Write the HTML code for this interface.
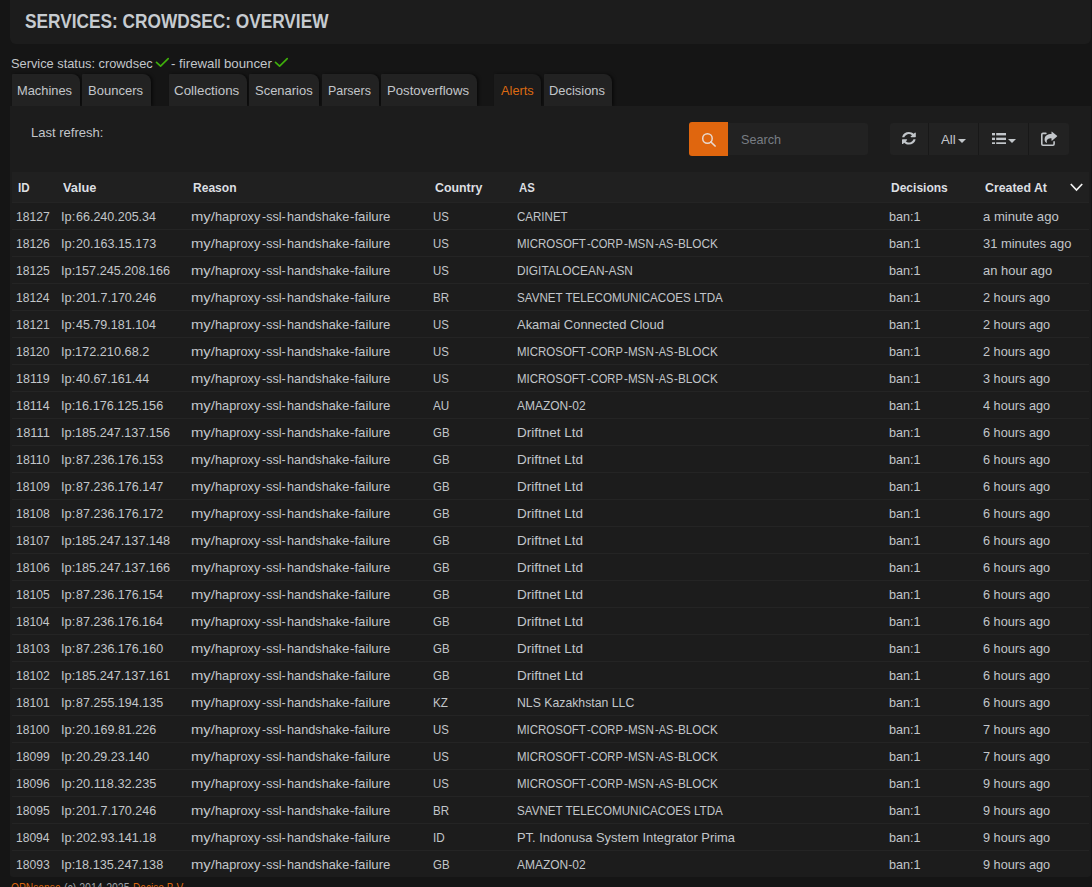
<!DOCTYPE html>
<html><head><meta charset="utf-8"><title>Services: CrowdSec: Overview</title>
<style>
html,body{margin:0;padding:0}
body{width:1092px;height:887px;overflow:hidden;background:#151515;position:relative;font-family:"Liberation Sans",sans-serif}
.t{position:absolute;white-space:pre;line-height:1;transform-origin:0 0;display:block}
.b{position:absolute;display:block}
</style></head><body>
<div class="b" style="left:10px;top:0px;width:1081px;height:44px;background:#1c1c1c;border-radius:0 0 6px 6px"></div>
<span class="t" style="left:25.00px;top:11.17px;font-size:20px;font-weight:700;color:#c6cbd0;transform:scaleX(0.8633);">SERVICES: CROWDSEC: OVERVIEW</span>
<span class="t" style="left:11.00px;top:56.90px;font-size:13px;font-weight:400;color:#c2c6ca;transform:scaleX(0.9853);">Service status: crowdsec</span>
<span class="t" style="left:171.00px;top:56.90px;font-size:13px;font-weight:400;color:#c2c6ca;transform:scaleX(1.0192);">- firewall bouncer</span>
<svg class="b" style="left:155.6px;top:58.2px" width="13" height="10" viewBox="0 0 13 10" overflow="visible"><path d="M0.5 4.4 L4.6 8.1 L12.2 0.7" fill="none" stroke="#3fae0b" stroke-width="1.7" stroke-linecap="round" stroke-linejoin="round"/></svg>
<svg class="b" style="left:275.4px;top:58.2px" width="13" height="10" viewBox="0 0 13 10" overflow="visible"><path d="M0.5 4.4 L4.6 8.1 L12.2 0.7" fill="none" stroke="#3fae0b" stroke-width="1.7" stroke-linecap="round" stroke-linejoin="round"/></svg>
<div class="b" style="left:11.6px;top:73.6px;width:68.30000000000001px;height:32.0px;background:#222222;border-radius:1px 8px 0 0;box-shadow:2px 0 3px rgba(0,0,0,.5)"></div>
<div class="b" style="left:82.0px;top:73.6px;width:68.5px;height:32.0px;background:#222222;border-radius:1px 8px 0 0;box-shadow:2px 0 3px rgba(0,0,0,.5)"></div>
<div class="b" style="left:168.5px;top:73.6px;width:78.39999999999998px;height:32.0px;background:#222222;border-radius:1px 8px 0 0;box-shadow:2px 0 3px rgba(0,0,0,.5)"></div>
<div class="b" style="left:248.6px;top:73.6px;width:70.70000000000002px;height:32.0px;background:#222222;border-radius:1px 8px 0 0;box-shadow:2px 0 3px rgba(0,0,0,.5)"></div>
<div class="b" style="left:322.0px;top:73.6px;width:56.599999999999966px;height:32.0px;background:#222222;border-radius:1px 8px 0 0;box-shadow:2px 0 3px rgba(0,0,0,.5)"></div>
<div class="b" style="left:381.3px;top:73.6px;width:95.79999999999995px;height:32.0px;background:#222222;border-radius:1px 8px 0 0;box-shadow:2px 0 3px rgba(0,0,0,.5)"></div>
<div class="b" style="left:494.20000000000005px;top:73.6px;width:46.5px;height:32.0px;background:#1c1c1c;border-radius:1px 8px 0 0;box-shadow:2px 0 3px rgba(0,0,0,.5)"></div>
<div class="b" style="left:543.5px;top:73.6px;width:68.60000000000002px;height:32.0px;background:#222222;border-radius:1px 8px 0 0;box-shadow:2px 0 3px rgba(0,0,0,.5)"></div>
<div class="b" style="left:10.2px;top:106.3px;width:1080.8px;height:770.7px;background:#1c1c1c;border-radius:0 0 3px 3px"></div>
<span class="t" style="left:17.00px;top:83.90px;font-size:13px;font-weight:400;color:#c2c6ca;transform:scaleX(0.9891);">Machines</span>
<span class="t" style="left:88.00px;top:83.90px;font-size:13px;font-weight:400;color:#c2c6ca;transform:scaleX(1.0009);">Bouncers</span>
<span class="t" style="left:174.00px;top:83.90px;font-size:13px;font-weight:400;color:#c2c6ca;transform:scaleX(1.0262);">Collections</span>
<span class="t" style="left:255.00px;top:83.90px;font-size:13px;font-weight:400;color:#c2c6ca;transform:scaleX(0.9983);">Scenarios</span>
<span class="t" style="left:328.00px;top:83.90px;font-size:13px;font-weight:400;color:#c2c6ca;transform:scaleX(0.9571);">Parsers</span>
<span class="t" style="left:387.00px;top:83.90px;font-size:13px;font-weight:400;color:#c2c6ca;transform:scaleX(1.0130);">Postoverflows</span>
<span class="t" style="left:501.00px;top:83.90px;font-size:13px;font-weight:400;color:#dd6a12;transform:scaleX(0.9847);">Alerts</span>
<span class="t" style="left:549.00px;top:83.90px;font-size:13px;font-weight:400;color:#c2c6ca;transform:scaleX(0.9937);">Decisions</span>
<span class="t" style="left:31.00px;top:125.60px;font-size:13px;font-weight:400;color:#c2c6ca;transform:scaleX(1.0021);">Last refresh:</span>
<div class="b" style="left:689.2px;top:121.8px;width:39.0px;height:34.000000000000014px;background:#e0660e;border-radius:3px 0 0 3px"></div>
<svg class="b" style="left:701px;top:132px" width="16" height="16" viewBox="0 0 16 16"><circle cx="6.45" cy="6.5" r="4.75" fill="none" stroke="#e8d9d0" stroke-width="1.5"/><path d="M9.9 10 L14.1 14" stroke="#e8d9d0" stroke-width="1.7" stroke-linecap="round"/></svg>
<div class="b" style="left:728.2px;top:123.2px;width:139.79999999999995px;height:31.700000000000003px;background:#222222;border-radius:0 3px 3px 0"></div>
<span class="t" style="left:741.00px;top:133.10px;font-size:13px;font-weight:400;color:#787d83;transform:scaleX(0.9702);">Search</span>
<div class="b" style="left:890.2px;top:123.2px;width:178.39999999999986px;height:31.700000000000003px;background:#222222;border-radius:3px"></div>
<div class="b" style="left:927.7px;top:123.2px;width:1.0px;height:31.700000000000003px;background:#181818;"></div>
<div class="b" style="left:977.9px;top:123.2px;width:1.0px;height:31.700000000000003px;background:#181818;"></div>
<div class="b" style="left:1027.9px;top:123.2px;width:1.0px;height:31.700000000000003px;background:#181818;"></div>
<span class="t" style="left:941.00px;top:133.10px;font-size:13px;font-weight:400;color:#c2c6ca;transform:scaleX(1.0185);">All</span>
<svg class="b" style="left:958.1px;top:138.9px" width="8" height="4" viewBox="0 0 8 4"><path d="M0 0H8L4 4Z" fill="#c2c6ca"/></svg>
<svg class="b" style="left:1008.3px;top:138.9px" width="8" height="4" viewBox="0 0 8 4"><path d="M0 0H8L4 4Z" fill="#c2c6ca"/></svg>
<svg class="b" style="left:902.3px;top:132.4px" width="13.8" height="12.6" viewBox="128 128 1536 1536" preserveAspectRatio="none"><path fill="#c2c6ca" d="M1639 1056q0 5-1 7-64 268-268 434.500t-478 166.500q-146 0-282.500-55t-243.500-157l-129 129q-19 19-45 19t-45-19-19-45v-448q0-26 19-45t45-19h448q26 0 45 19t19 45-19 45l-137 137q71 66 161 102t187 36q134 0 250-65t186-179q11-17 53-117 8-23 30-23h192q13 0 22.500 9.500t9.500 22.500zm25-800v448q0 26-19 45t-45 19h-448q-26 0-45-19t-19-45 19-45l138-138q-148-137-349-137-134 0-250 65t-186 179q-11 17-53 117-8 23-30 23h-199q-13 0-22.500-9.500t-9.500-22.500v-7q65-268 270-434.500t480-166.500q146 0 284 55.500t245 156.500l130-129q19-19 45-19t45 19 19 45z"/></svg>
<svg class="b" style="left:991.6px;top:132.8px" width="14.4" height="11.7" viewBox="0 0 14.4 11.7" fill="#c2c6ca"><rect x="0" y="0" width="3" height="2.4"/><rect x="4.2" y="0" width="10.2" height="2.4"/><rect x="0" y="4.65" width="3" height="2.4"/><rect x="4.2" y="4.65" width="10.2" height="2.4"/><rect x="0" y="9.3" width="3" height="2.4"/><rect x="4.2" y="9.3" width="10.2" height="2.4"/></svg>
<svg class="b" style="left:1040px;top:131px" width="18" height="16" viewBox="0 0 18 16"><path d="M5.9 2.4H3.0Q1.8 2.4 1.8 3.6V13.0Q1.8 14.2 3.0 14.2H12.9Q14.1 14.2 14.1 13.0V10.9" fill="none" stroke="#c2c6ca" stroke-width="1.6" stroke-linecap="round"/><path fill="#c2c6ca" d="M11.5 0.9Q11.5 0.3 12.0 0.7L17.0 4.8Q17.4 5.2 17.0 5.6L12.0 9.7Q11.5 10.1 11.5 9.5V7.3C8.2 7.3 6.3 8.3 6.9 11.3C7.0 11.9 6.4 12.1 6.0 11.6C5.2 10.7 4.6 9.6 4.6 8.4C4.6 4.6 7.8 3.1 11.5 3.1Z"/></svg>
<div class="b" style="left:12px;top:172px;width:1076.5px;height:30px;background:#202020;"></div>
<span class="t" style="left:18.00px;top:181.10px;font-size:13px;font-weight:700;color:#dcdfe2;transform:scaleX(0.8920);">ID</span>
<span class="t" style="left:63.00px;top:181.10px;font-size:13px;font-weight:700;color:#dcdfe2;transform:scaleX(0.9836);">Value</span>
<span class="t" style="left:193.00px;top:181.10px;font-size:13px;font-weight:700;color:#dcdfe2;transform:scaleX(0.9265);">Reason</span>
<span class="t" style="left:435.00px;top:181.10px;font-size:13px;font-weight:700;color:#dcdfe2;transform:scaleX(0.9518);">Country</span>
<span class="t" style="left:519.00px;top:181.10px;font-size:13px;font-weight:700;color:#dcdfe2;transform:scaleX(0.8771);">AS</span>
<span class="t" style="left:891.00px;top:181.10px;font-size:13px;font-weight:700;color:#dcdfe2;transform:scaleX(0.9243);">Decisions</span>
<span class="t" style="left:985.00px;top:181.10px;font-size:13px;font-weight:700;color:#dcdfe2;transform:scaleX(0.9485);">Created At</span>
<svg class="b" style="left:1070.4px;top:183.2px" width="13" height="9" viewBox="0 0 13 9"><path d="M0.8 1 L6.5 7 L12.2 1" fill="none" stroke="#f2f2f2" stroke-width="1.7"/></svg>
<div class="b" style="left:12px;top:202px;width:1076.5px;height:1px;background:#242424;"></div>
<span class="t" style="left:16.00px;top:210.10px;font-size:13px;font-weight:400;color:#c2c6ca;transform:scaleX(0.9338);">18127</span>
<span class="t" style="left:61.00px;top:210.10px;font-size:13px;font-weight:400;color:#c2c6ca;transform:scaleX(0.9849);">Ip:</span>
<span class="t" style="left:76.00px;top:210.10px;font-size:13px;font-weight:400;color:#c2c6ca;transform:scaleX(0.9625);">66.240.205.34</span>
<span class="t" style="left:191.00px;top:210.10px;font-size:13px;font-weight:400;color:#c2c6ca;transform:scaleX(1.1398);">my/</span>
<span class="t" style="left:215.00px;top:210.10px;font-size:13px;font-weight:400;color:#c2c6ca;transform:scaleX(0.9805);">haproxy</span>
<span class="t" style="left:262.00px;top:210.10px;font-size:13px;font-weight:400;color:#c2c6ca;transform:scaleX(0.9646);">-ssl-</span>
<span class="t" style="left:287.00px;top:210.10px;font-size:13px;font-weight:400;color:#c2c6ca;transform:scaleX(0.9786);">handshake</span>
<span class="t" style="left:350.00px;top:210.10px;font-size:13px;font-weight:400;color:#c2c6ca;transform:scaleX(1.0178);">-failure</span>
<span class="t" style="left:433.00px;top:210.10px;font-size:13px;font-weight:400;color:#c2c6ca;transform:scaleX(0.8771);">US</span>
<span class="t" style="left:517.00px;top:210.10px;font-size:13px;font-weight:400;color:#c2c6ca;transform:scaleX(0.8872);">CARINET</span>
<span class="t" style="left:889.00px;top:210.10px;font-size:13px;font-weight:400;color:#c2c6ca;transform:scaleX(0.9703);">ban:1</span>
<span class="t" style="left:983.00px;top:210.10px;font-size:13px;font-weight:400;color:#c2c6ca;transform:scaleX(1.0074);">a minute ago</span>
<div class="b" style="left:12px;top:229px;width:1076.5px;height:1px;background:#242424;"></div>
<span class="t" style="left:16.00px;top:237.10px;font-size:13px;font-weight:400;color:#c2c6ca;transform:scaleX(0.9338);">18126</span>
<span class="t" style="left:61.00px;top:237.10px;font-size:13px;font-weight:400;color:#c2c6ca;transform:scaleX(0.9849);">Ip:</span>
<span class="t" style="left:76.00px;top:237.10px;font-size:13px;font-weight:400;color:#c2c6ca;transform:scaleX(0.9655);">20.163.15.173</span>
<span class="t" style="left:191.00px;top:237.10px;font-size:13px;font-weight:400;color:#c2c6ca;transform:scaleX(1.1398);">my/</span>
<span class="t" style="left:215.00px;top:237.10px;font-size:13px;font-weight:400;color:#c2c6ca;transform:scaleX(0.9805);">haproxy</span>
<span class="t" style="left:262.00px;top:237.10px;font-size:13px;font-weight:400;color:#c2c6ca;transform:scaleX(0.9646);">-ssl-</span>
<span class="t" style="left:287.00px;top:237.10px;font-size:13px;font-weight:400;color:#c2c6ca;transform:scaleX(0.9786);">handshake</span>
<span class="t" style="left:350.00px;top:237.10px;font-size:13px;font-weight:400;color:#c2c6ca;transform:scaleX(1.0178);">-failure</span>
<span class="t" style="left:433.00px;top:237.10px;font-size:13px;font-weight:400;color:#c2c6ca;transform:scaleX(0.8771);">US</span>
<span class="t" style="left:517.00px;top:237.10px;font-size:13px;font-weight:400;color:#c2c6ca;transform:scaleX(0.8830);">MICROSOFT</span>
<span class="t" style="left:587.00px;top:237.10px;font-size:13px;font-weight:400;color:#c2c6ca;transform:scaleX(0.8545);">-CORP</span>
<span class="t" style="left:624.00px;top:237.10px;font-size:13px;font-weight:400;color:#c2c6ca;transform:scaleX(0.8977);">-MSN</span>
<span class="t" style="left:655.00px;top:237.10px;font-size:13px;font-weight:400;color:#c2c6ca;transform:scaleX(0.8500);">-AS</span>
<span class="t" style="left:674.00px;top:237.10px;font-size:13px;font-weight:400;color:#c2c6ca;transform:scaleX(0.9067);">-BLOCK</span>
<span class="t" style="left:889.00px;top:237.10px;font-size:13px;font-weight:400;color:#c2c6ca;transform:scaleX(0.9703);">ban:1</span>
<span class="t" style="left:983.00px;top:237.10px;font-size:13px;font-weight:400;color:#c2c6ca;transform:scaleX(0.9943);">31 minutes ago</span>
<div class="b" style="left:12px;top:256px;width:1076.5px;height:1px;background:#242424;"></div>
<span class="t" style="left:16.00px;top:264.10px;font-size:13px;font-weight:400;color:#c2c6ca;transform:scaleX(0.9338);">18125</span>
<span class="t" style="left:61.00px;top:264.10px;font-size:13px;font-weight:400;color:#c2c6ca;transform:scaleX(0.9849);">Ip:</span>
<span class="t" style="left:75.00px;top:264.10px;font-size:13px;font-weight:400;color:#c2c6ca;transform:scaleX(0.9747);">157.245.208.166</span>
<span class="t" style="left:191.00px;top:264.10px;font-size:13px;font-weight:400;color:#c2c6ca;transform:scaleX(1.1398);">my/</span>
<span class="t" style="left:215.00px;top:264.10px;font-size:13px;font-weight:400;color:#c2c6ca;transform:scaleX(0.9805);">haproxy</span>
<span class="t" style="left:262.00px;top:264.10px;font-size:13px;font-weight:400;color:#c2c6ca;transform:scaleX(0.9646);">-ssl-</span>
<span class="t" style="left:287.00px;top:264.10px;font-size:13px;font-weight:400;color:#c2c6ca;transform:scaleX(0.9786);">handshake</span>
<span class="t" style="left:350.00px;top:264.10px;font-size:13px;font-weight:400;color:#c2c6ca;transform:scaleX(1.0178);">-failure</span>
<span class="t" style="left:433.00px;top:264.10px;font-size:13px;font-weight:400;color:#c2c6ca;transform:scaleX(0.8771);">US</span>
<span class="t" style="left:517.00px;top:264.10px;font-size:13px;font-weight:400;color:#c2c6ca;transform:scaleX(0.9133);">DIGITALOCEAN-ASN</span>
<span class="t" style="left:889.00px;top:264.10px;font-size:13px;font-weight:400;color:#c2c6ca;transform:scaleX(0.9703);">ban:1</span>
<span class="t" style="left:983.00px;top:264.10px;font-size:13px;font-weight:400;color:#c2c6ca;transform:scaleX(0.9971);">an hour ago</span>
<div class="b" style="left:12px;top:283px;width:1076.5px;height:1px;background:#242424;"></div>
<span class="t" style="left:16.00px;top:291.10px;font-size:13px;font-weight:400;color:#c2c6ca;transform:scaleX(0.9273);">18124</span>
<span class="t" style="left:61.00px;top:291.10px;font-size:13px;font-weight:400;color:#c2c6ca;transform:scaleX(0.9849);">Ip:</span>
<span class="t" style="left:76.00px;top:291.10px;font-size:13px;font-weight:400;color:#c2c6ca;transform:scaleX(0.9655);">201.7.170.246</span>
<span class="t" style="left:191.00px;top:291.10px;font-size:13px;font-weight:400;color:#c2c6ca;transform:scaleX(1.1398);">my/</span>
<span class="t" style="left:215.00px;top:291.10px;font-size:13px;font-weight:400;color:#c2c6ca;transform:scaleX(0.9805);">haproxy</span>
<span class="t" style="left:262.00px;top:291.10px;font-size:13px;font-weight:400;color:#c2c6ca;transform:scaleX(0.9646);">-ssl-</span>
<span class="t" style="left:287.00px;top:291.10px;font-size:13px;font-weight:400;color:#c2c6ca;transform:scaleX(0.9786);">handshake</span>
<span class="t" style="left:350.00px;top:291.10px;font-size:13px;font-weight:400;color:#c2c6ca;transform:scaleX(1.0178);">-failure</span>
<span class="t" style="left:433.00px;top:291.10px;font-size:13px;font-weight:400;color:#c2c6ca;transform:scaleX(0.8886);">BR</span>
<span class="t" style="left:517.00px;top:291.10px;font-size:13px;font-weight:400;color:#c2c6ca;transform:scaleX(0.8941);">SAVNET TELECOMUNICACOES LTDA</span>
<span class="t" style="left:889.00px;top:291.10px;font-size:13px;font-weight:400;color:#c2c6ca;transform:scaleX(0.9703);">ban:1</span>
<span class="t" style="left:983.00px;top:291.10px;font-size:13px;font-weight:400;color:#c2c6ca;transform:scaleX(0.9787);">2 hours ago</span>
<div class="b" style="left:12px;top:310px;width:1076.5px;height:1px;background:#242424;"></div>
<span class="t" style="left:16.00px;top:318.10px;font-size:13px;font-weight:400;color:#c2c6ca;transform:scaleX(0.9338);">18121</span>
<span class="t" style="left:61.00px;top:318.10px;font-size:13px;font-weight:400;color:#c2c6ca;transform:scaleX(0.9849);">Ip:</span>
<span class="t" style="left:76.00px;top:318.10px;font-size:13px;font-weight:400;color:#c2c6ca;transform:scaleX(0.9625);">45.79.181.104</span>
<span class="t" style="left:191.00px;top:318.10px;font-size:13px;font-weight:400;color:#c2c6ca;transform:scaleX(1.1398);">my/</span>
<span class="t" style="left:215.00px;top:318.10px;font-size:13px;font-weight:400;color:#c2c6ca;transform:scaleX(0.9805);">haproxy</span>
<span class="t" style="left:262.00px;top:318.10px;font-size:13px;font-weight:400;color:#c2c6ca;transform:scaleX(0.9646);">-ssl-</span>
<span class="t" style="left:287.00px;top:318.10px;font-size:13px;font-weight:400;color:#c2c6ca;transform:scaleX(0.9786);">handshake</span>
<span class="t" style="left:350.00px;top:318.10px;font-size:13px;font-weight:400;color:#c2c6ca;transform:scaleX(1.0178);">-failure</span>
<span class="t" style="left:433.00px;top:318.10px;font-size:13px;font-weight:400;color:#c2c6ca;transform:scaleX(0.8771);">US</span>
<span class="t" style="left:517.00px;top:318.10px;font-size:13px;font-weight:400;color:#c2c6ca;transform:scaleX(0.9969);">Akamai Connected Cloud</span>
<span class="t" style="left:889.00px;top:318.10px;font-size:13px;font-weight:400;color:#c2c6ca;transform:scaleX(0.9703);">ban:1</span>
<span class="t" style="left:983.00px;top:318.10px;font-size:13px;font-weight:400;color:#c2c6ca;transform:scaleX(0.9787);">2 hours ago</span>
<div class="b" style="left:12px;top:337px;width:1076.5px;height:1px;background:#242424;"></div>
<span class="t" style="left:16.00px;top:345.10px;font-size:13px;font-weight:400;color:#c2c6ca;transform:scaleX(0.9273);">18120</span>
<span class="t" style="left:61.00px;top:345.10px;font-size:13px;font-weight:400;color:#c2c6ca;transform:scaleX(0.9849);">Ip:</span>
<span class="t" style="left:75.00px;top:345.10px;font-size:13px;font-weight:400;color:#c2c6ca;transform:scaleX(0.9794);">172.210.68.2</span>
<span class="t" style="left:191.00px;top:345.10px;font-size:13px;font-weight:400;color:#c2c6ca;transform:scaleX(1.1398);">my/</span>
<span class="t" style="left:215.00px;top:345.10px;font-size:13px;font-weight:400;color:#c2c6ca;transform:scaleX(0.9805);">haproxy</span>
<span class="t" style="left:262.00px;top:345.10px;font-size:13px;font-weight:400;color:#c2c6ca;transform:scaleX(0.9646);">-ssl-</span>
<span class="t" style="left:287.00px;top:345.10px;font-size:13px;font-weight:400;color:#c2c6ca;transform:scaleX(0.9786);">handshake</span>
<span class="t" style="left:350.00px;top:345.10px;font-size:13px;font-weight:400;color:#c2c6ca;transform:scaleX(1.0178);">-failure</span>
<span class="t" style="left:433.00px;top:345.10px;font-size:13px;font-weight:400;color:#c2c6ca;transform:scaleX(0.8771);">US</span>
<span class="t" style="left:517.00px;top:345.10px;font-size:13px;font-weight:400;color:#c2c6ca;transform:scaleX(0.8830);">MICROSOFT</span>
<span class="t" style="left:587.00px;top:345.10px;font-size:13px;font-weight:400;color:#c2c6ca;transform:scaleX(0.8545);">-CORP</span>
<span class="t" style="left:624.00px;top:345.10px;font-size:13px;font-weight:400;color:#c2c6ca;transform:scaleX(0.8977);">-MSN</span>
<span class="t" style="left:655.00px;top:345.10px;font-size:13px;font-weight:400;color:#c2c6ca;transform:scaleX(0.8500);">-AS</span>
<span class="t" style="left:674.00px;top:345.10px;font-size:13px;font-weight:400;color:#c2c6ca;transform:scaleX(0.9067);">-BLOCK</span>
<span class="t" style="left:889.00px;top:345.10px;font-size:13px;font-weight:400;color:#c2c6ca;transform:scaleX(0.9703);">ban:1</span>
<span class="t" style="left:983.00px;top:345.10px;font-size:13px;font-weight:400;color:#c2c6ca;transform:scaleX(0.9787);">2 hours ago</span>
<div class="b" style="left:12px;top:364px;width:1076.5px;height:1px;background:#242424;"></div>
<span class="t" style="left:16.00px;top:372.10px;font-size:13px;font-weight:400;color:#c2c6ca;transform:scaleX(0.9609);">18119</span>
<span class="t" style="left:61.00px;top:372.10px;font-size:13px;font-weight:400;color:#c2c6ca;transform:scaleX(0.9849);">Ip:</span>
<span class="t" style="left:76.00px;top:372.10px;font-size:13px;font-weight:400;color:#c2c6ca;transform:scaleX(0.9629);">40.67.161.44</span>
<span class="t" style="left:191.00px;top:372.10px;font-size:13px;font-weight:400;color:#c2c6ca;transform:scaleX(1.1398);">my/</span>
<span class="t" style="left:215.00px;top:372.10px;font-size:13px;font-weight:400;color:#c2c6ca;transform:scaleX(0.9805);">haproxy</span>
<span class="t" style="left:262.00px;top:372.10px;font-size:13px;font-weight:400;color:#c2c6ca;transform:scaleX(0.9646);">-ssl-</span>
<span class="t" style="left:287.00px;top:372.10px;font-size:13px;font-weight:400;color:#c2c6ca;transform:scaleX(0.9786);">handshake</span>
<span class="t" style="left:350.00px;top:372.10px;font-size:13px;font-weight:400;color:#c2c6ca;transform:scaleX(1.0178);">-failure</span>
<span class="t" style="left:433.00px;top:372.10px;font-size:13px;font-weight:400;color:#c2c6ca;transform:scaleX(0.8771);">US</span>
<span class="t" style="left:517.00px;top:372.10px;font-size:13px;font-weight:400;color:#c2c6ca;transform:scaleX(0.8830);">MICROSOFT</span>
<span class="t" style="left:587.00px;top:372.10px;font-size:13px;font-weight:400;color:#c2c6ca;transform:scaleX(0.8545);">-CORP</span>
<span class="t" style="left:624.00px;top:372.10px;font-size:13px;font-weight:400;color:#c2c6ca;transform:scaleX(0.8977);">-MSN</span>
<span class="t" style="left:655.00px;top:372.10px;font-size:13px;font-weight:400;color:#c2c6ca;transform:scaleX(0.8500);">-AS</span>
<span class="t" style="left:674.00px;top:372.10px;font-size:13px;font-weight:400;color:#c2c6ca;transform:scaleX(0.9067);">-BLOCK</span>
<span class="t" style="left:889.00px;top:372.10px;font-size:13px;font-weight:400;color:#c2c6ca;transform:scaleX(0.9703);">ban:1</span>
<span class="t" style="left:983.00px;top:372.10px;font-size:13px;font-weight:400;color:#c2c6ca;transform:scaleX(0.9787);">3 hours ago</span>
<div class="b" style="left:12px;top:391px;width:1076.5px;height:1px;background:#242424;"></div>
<span class="t" style="left:16.00px;top:399.10px;font-size:13px;font-weight:400;color:#c2c6ca;transform:scaleX(0.9540);">18114</span>
<span class="t" style="left:61.00px;top:399.10px;font-size:13px;font-weight:400;color:#c2c6ca;transform:scaleX(0.9849);">Ip:</span>
<span class="t" style="left:75.00px;top:399.10px;font-size:13px;font-weight:400;color:#c2c6ca;transform:scaleX(0.9760);">16.176.125.156</span>
<span class="t" style="left:191.00px;top:399.10px;font-size:13px;font-weight:400;color:#c2c6ca;transform:scaleX(1.1398);">my/</span>
<span class="t" style="left:215.00px;top:399.10px;font-size:13px;font-weight:400;color:#c2c6ca;transform:scaleX(0.9805);">haproxy</span>
<span class="t" style="left:262.00px;top:399.10px;font-size:13px;font-weight:400;color:#c2c6ca;transform:scaleX(0.9646);">-ssl-</span>
<span class="t" style="left:287.00px;top:399.10px;font-size:13px;font-weight:400;color:#c2c6ca;transform:scaleX(0.9786);">handshake</span>
<span class="t" style="left:350.00px;top:399.10px;font-size:13px;font-weight:400;color:#c2c6ca;transform:scaleX(1.0178);">-failure</span>
<span class="t" style="left:433.00px;top:399.10px;font-size:13px;font-weight:400;color:#c2c6ca;transform:scaleX(0.8971);">AU</span>
<span class="t" style="left:517.00px;top:399.10px;font-size:13px;font-weight:400;color:#c2c6ca;transform:scaleX(0.9214);">AMAZON-02</span>
<span class="t" style="left:889.00px;top:399.10px;font-size:13px;font-weight:400;color:#c2c6ca;transform:scaleX(0.9703);">ban:1</span>
<span class="t" style="left:983.00px;top:399.10px;font-size:13px;font-weight:400;color:#c2c6ca;transform:scaleX(0.9787);">4 hours ago</span>
<div class="b" style="left:12px;top:418px;width:1076.5px;height:1px;background:#242424;"></div>
<span class="t" style="left:16.00px;top:426.10px;font-size:13px;font-weight:400;color:#c2c6ca;transform:scaleX(0.9896);">18111</span>
<span class="t" style="left:61.00px;top:426.10px;font-size:13px;font-weight:400;color:#c2c6ca;transform:scaleX(0.9849);">Ip:</span>
<span class="t" style="left:75.00px;top:426.10px;font-size:13px;font-weight:400;color:#c2c6ca;transform:scaleX(0.9747);">185.247.137.156</span>
<span class="t" style="left:191.00px;top:426.10px;font-size:13px;font-weight:400;color:#c2c6ca;transform:scaleX(1.1398);">my/</span>
<span class="t" style="left:215.00px;top:426.10px;font-size:13px;font-weight:400;color:#c2c6ca;transform:scaleX(0.9805);">haproxy</span>
<span class="t" style="left:262.00px;top:426.10px;font-size:13px;font-weight:400;color:#c2c6ca;transform:scaleX(0.9646);">-ssl-</span>
<span class="t" style="left:287.00px;top:426.10px;font-size:13px;font-weight:400;color:#c2c6ca;transform:scaleX(0.9786);">handshake</span>
<span class="t" style="left:350.00px;top:426.10px;font-size:13px;font-weight:400;color:#c2c6ca;transform:scaleX(1.0178);">-failure</span>
<span class="t" style="left:433.00px;top:426.10px;font-size:13px;font-weight:400;color:#c2c6ca;transform:scaleX(0.8806);">GB</span>
<span class="t" style="left:517.00px;top:426.10px;font-size:13px;font-weight:400;color:#c2c6ca;transform:scaleX(1.0382);">Driftnet Ltd</span>
<span class="t" style="left:889.00px;top:426.10px;font-size:13px;font-weight:400;color:#c2c6ca;transform:scaleX(0.9703);">ban:1</span>
<span class="t" style="left:983.00px;top:426.10px;font-size:13px;font-weight:400;color:#c2c6ca;transform:scaleX(0.9787);">6 hours ago</span>
<div class="b" style="left:12px;top:445px;width:1076.5px;height:1px;background:#242424;"></div>
<span class="t" style="left:16.00px;top:453.10px;font-size:13px;font-weight:400;color:#c2c6ca;transform:scaleX(0.9540);">18110</span>
<span class="t" style="left:61.00px;top:453.10px;font-size:13px;font-weight:400;color:#c2c6ca;transform:scaleX(0.9849);">Ip:</span>
<span class="t" style="left:76.00px;top:453.10px;font-size:13px;font-weight:400;color:#c2c6ca;transform:scaleX(0.9649);">87.236.176.153</span>
<span class="t" style="left:191.00px;top:453.10px;font-size:13px;font-weight:400;color:#c2c6ca;transform:scaleX(1.1398);">my/</span>
<span class="t" style="left:215.00px;top:453.10px;font-size:13px;font-weight:400;color:#c2c6ca;transform:scaleX(0.9805);">haproxy</span>
<span class="t" style="left:262.00px;top:453.10px;font-size:13px;font-weight:400;color:#c2c6ca;transform:scaleX(0.9646);">-ssl-</span>
<span class="t" style="left:287.00px;top:453.10px;font-size:13px;font-weight:400;color:#c2c6ca;transform:scaleX(0.9786);">handshake</span>
<span class="t" style="left:350.00px;top:453.10px;font-size:13px;font-weight:400;color:#c2c6ca;transform:scaleX(1.0178);">-failure</span>
<span class="t" style="left:433.00px;top:453.10px;font-size:13px;font-weight:400;color:#c2c6ca;transform:scaleX(0.8806);">GB</span>
<span class="t" style="left:517.00px;top:453.10px;font-size:13px;font-weight:400;color:#c2c6ca;transform:scaleX(1.0382);">Driftnet Ltd</span>
<span class="t" style="left:889.00px;top:453.10px;font-size:13px;font-weight:400;color:#c2c6ca;transform:scaleX(0.9703);">ban:1</span>
<span class="t" style="left:983.00px;top:453.10px;font-size:13px;font-weight:400;color:#c2c6ca;transform:scaleX(0.9787);">6 hours ago</span>
<div class="b" style="left:12px;top:472px;width:1076.5px;height:1px;background:#242424;"></div>
<span class="t" style="left:16.00px;top:480.10px;font-size:13px;font-weight:400;color:#c2c6ca;transform:scaleX(0.9338);">18109</span>
<span class="t" style="left:61.00px;top:480.10px;font-size:13px;font-weight:400;color:#c2c6ca;transform:scaleX(0.9849);">Ip:</span>
<span class="t" style="left:76.00px;top:480.10px;font-size:13px;font-weight:400;color:#c2c6ca;transform:scaleX(0.9649);">87.236.176.147</span>
<span class="t" style="left:191.00px;top:480.10px;font-size:13px;font-weight:400;color:#c2c6ca;transform:scaleX(1.1398);">my/</span>
<span class="t" style="left:215.00px;top:480.10px;font-size:13px;font-weight:400;color:#c2c6ca;transform:scaleX(0.9805);">haproxy</span>
<span class="t" style="left:262.00px;top:480.10px;font-size:13px;font-weight:400;color:#c2c6ca;transform:scaleX(0.9646);">-ssl-</span>
<span class="t" style="left:287.00px;top:480.10px;font-size:13px;font-weight:400;color:#c2c6ca;transform:scaleX(0.9786);">handshake</span>
<span class="t" style="left:350.00px;top:480.10px;font-size:13px;font-weight:400;color:#c2c6ca;transform:scaleX(1.0178);">-failure</span>
<span class="t" style="left:433.00px;top:480.10px;font-size:13px;font-weight:400;color:#c2c6ca;transform:scaleX(0.8806);">GB</span>
<span class="t" style="left:517.00px;top:480.10px;font-size:13px;font-weight:400;color:#c2c6ca;transform:scaleX(1.0382);">Driftnet Ltd</span>
<span class="t" style="left:889.00px;top:480.10px;font-size:13px;font-weight:400;color:#c2c6ca;transform:scaleX(0.9703);">ban:1</span>
<span class="t" style="left:983.00px;top:480.10px;font-size:13px;font-weight:400;color:#c2c6ca;transform:scaleX(0.9787);">6 hours ago</span>
<div class="b" style="left:12px;top:499px;width:1076.5px;height:1px;background:#242424;"></div>
<span class="t" style="left:16.00px;top:507.10px;font-size:13px;font-weight:400;color:#c2c6ca;transform:scaleX(0.9338);">18108</span>
<span class="t" style="left:61.00px;top:507.10px;font-size:13px;font-weight:400;color:#c2c6ca;transform:scaleX(0.9849);">Ip:</span>
<span class="t" style="left:76.00px;top:507.10px;font-size:13px;font-weight:400;color:#c2c6ca;transform:scaleX(0.9649);">87.236.176.172</span>
<span class="t" style="left:191.00px;top:507.10px;font-size:13px;font-weight:400;color:#c2c6ca;transform:scaleX(1.1398);">my/</span>
<span class="t" style="left:215.00px;top:507.10px;font-size:13px;font-weight:400;color:#c2c6ca;transform:scaleX(0.9805);">haproxy</span>
<span class="t" style="left:262.00px;top:507.10px;font-size:13px;font-weight:400;color:#c2c6ca;transform:scaleX(0.9646);">-ssl-</span>
<span class="t" style="left:287.00px;top:507.10px;font-size:13px;font-weight:400;color:#c2c6ca;transform:scaleX(0.9786);">handshake</span>
<span class="t" style="left:350.00px;top:507.10px;font-size:13px;font-weight:400;color:#c2c6ca;transform:scaleX(1.0178);">-failure</span>
<span class="t" style="left:433.00px;top:507.10px;font-size:13px;font-weight:400;color:#c2c6ca;transform:scaleX(0.8806);">GB</span>
<span class="t" style="left:517.00px;top:507.10px;font-size:13px;font-weight:400;color:#c2c6ca;transform:scaleX(1.0382);">Driftnet Ltd</span>
<span class="t" style="left:889.00px;top:507.10px;font-size:13px;font-weight:400;color:#c2c6ca;transform:scaleX(0.9703);">ban:1</span>
<span class="t" style="left:983.00px;top:507.10px;font-size:13px;font-weight:400;color:#c2c6ca;transform:scaleX(0.9787);">6 hours ago</span>
<div class="b" style="left:12px;top:526px;width:1076.5px;height:1px;background:#242424;"></div>
<span class="t" style="left:16.00px;top:534.10px;font-size:13px;font-weight:400;color:#c2c6ca;transform:scaleX(0.9338);">18107</span>
<span class="t" style="left:61.00px;top:534.10px;font-size:13px;font-weight:400;color:#c2c6ca;transform:scaleX(0.9849);">Ip:</span>
<span class="t" style="left:75.00px;top:534.10px;font-size:13px;font-weight:400;color:#c2c6ca;transform:scaleX(0.9747);">185.247.137.148</span>
<span class="t" style="left:191.00px;top:534.10px;font-size:13px;font-weight:400;color:#c2c6ca;transform:scaleX(1.1398);">my/</span>
<span class="t" style="left:215.00px;top:534.10px;font-size:13px;font-weight:400;color:#c2c6ca;transform:scaleX(0.9805);">haproxy</span>
<span class="t" style="left:262.00px;top:534.10px;font-size:13px;font-weight:400;color:#c2c6ca;transform:scaleX(0.9646);">-ssl-</span>
<span class="t" style="left:287.00px;top:534.10px;font-size:13px;font-weight:400;color:#c2c6ca;transform:scaleX(0.9786);">handshake</span>
<span class="t" style="left:350.00px;top:534.10px;font-size:13px;font-weight:400;color:#c2c6ca;transform:scaleX(1.0178);">-failure</span>
<span class="t" style="left:433.00px;top:534.10px;font-size:13px;font-weight:400;color:#c2c6ca;transform:scaleX(0.8806);">GB</span>
<span class="t" style="left:517.00px;top:534.10px;font-size:13px;font-weight:400;color:#c2c6ca;transform:scaleX(1.0382);">Driftnet Ltd</span>
<span class="t" style="left:889.00px;top:534.10px;font-size:13px;font-weight:400;color:#c2c6ca;transform:scaleX(0.9703);">ban:1</span>
<span class="t" style="left:983.00px;top:534.10px;font-size:13px;font-weight:400;color:#c2c6ca;transform:scaleX(0.9787);">6 hours ago</span>
<div class="b" style="left:12px;top:553px;width:1076.5px;height:1px;background:#242424;"></div>
<span class="t" style="left:16.00px;top:561.10px;font-size:13px;font-weight:400;color:#c2c6ca;transform:scaleX(0.9338);">18106</span>
<span class="t" style="left:61.00px;top:561.10px;font-size:13px;font-weight:400;color:#c2c6ca;transform:scaleX(0.9849);">Ip:</span>
<span class="t" style="left:75.00px;top:561.10px;font-size:13px;font-weight:400;color:#c2c6ca;transform:scaleX(0.9747);">185.247.137.166</span>
<span class="t" style="left:191.00px;top:561.10px;font-size:13px;font-weight:400;color:#c2c6ca;transform:scaleX(1.1398);">my/</span>
<span class="t" style="left:215.00px;top:561.10px;font-size:13px;font-weight:400;color:#c2c6ca;transform:scaleX(0.9805);">haproxy</span>
<span class="t" style="left:262.00px;top:561.10px;font-size:13px;font-weight:400;color:#c2c6ca;transform:scaleX(0.9646);">-ssl-</span>
<span class="t" style="left:287.00px;top:561.10px;font-size:13px;font-weight:400;color:#c2c6ca;transform:scaleX(0.9786);">handshake</span>
<span class="t" style="left:350.00px;top:561.10px;font-size:13px;font-weight:400;color:#c2c6ca;transform:scaleX(1.0178);">-failure</span>
<span class="t" style="left:433.00px;top:561.10px;font-size:13px;font-weight:400;color:#c2c6ca;transform:scaleX(0.8806);">GB</span>
<span class="t" style="left:517.00px;top:561.10px;font-size:13px;font-weight:400;color:#c2c6ca;transform:scaleX(1.0382);">Driftnet Ltd</span>
<span class="t" style="left:889.00px;top:561.10px;font-size:13px;font-weight:400;color:#c2c6ca;transform:scaleX(0.9703);">ban:1</span>
<span class="t" style="left:983.00px;top:561.10px;font-size:13px;font-weight:400;color:#c2c6ca;transform:scaleX(0.9787);">6 hours ago</span>
<div class="b" style="left:12px;top:580px;width:1076.5px;height:1px;background:#242424;"></div>
<span class="t" style="left:16.00px;top:588.10px;font-size:13px;font-weight:400;color:#c2c6ca;transform:scaleX(0.9338);">18105</span>
<span class="t" style="left:61.00px;top:588.10px;font-size:13px;font-weight:400;color:#c2c6ca;transform:scaleX(0.9849);">Ip:</span>
<span class="t" style="left:76.00px;top:588.10px;font-size:13px;font-weight:400;color:#c2c6ca;transform:scaleX(0.9622);">87.236.176.154</span>
<span class="t" style="left:191.00px;top:588.10px;font-size:13px;font-weight:400;color:#c2c6ca;transform:scaleX(1.1398);">my/</span>
<span class="t" style="left:215.00px;top:588.10px;font-size:13px;font-weight:400;color:#c2c6ca;transform:scaleX(0.9805);">haproxy</span>
<span class="t" style="left:262.00px;top:588.10px;font-size:13px;font-weight:400;color:#c2c6ca;transform:scaleX(0.9646);">-ssl-</span>
<span class="t" style="left:287.00px;top:588.10px;font-size:13px;font-weight:400;color:#c2c6ca;transform:scaleX(0.9786);">handshake</span>
<span class="t" style="left:350.00px;top:588.10px;font-size:13px;font-weight:400;color:#c2c6ca;transform:scaleX(1.0178);">-failure</span>
<span class="t" style="left:433.00px;top:588.10px;font-size:13px;font-weight:400;color:#c2c6ca;transform:scaleX(0.8806);">GB</span>
<span class="t" style="left:517.00px;top:588.10px;font-size:13px;font-weight:400;color:#c2c6ca;transform:scaleX(1.0382);">Driftnet Ltd</span>
<span class="t" style="left:889.00px;top:588.10px;font-size:13px;font-weight:400;color:#c2c6ca;transform:scaleX(0.9703);">ban:1</span>
<span class="t" style="left:983.00px;top:588.10px;font-size:13px;font-weight:400;color:#c2c6ca;transform:scaleX(0.9787);">6 hours ago</span>
<div class="b" style="left:12px;top:607px;width:1076.5px;height:1px;background:#242424;"></div>
<span class="t" style="left:16.00px;top:615.10px;font-size:13px;font-weight:400;color:#c2c6ca;transform:scaleX(0.9273);">18104</span>
<span class="t" style="left:61.00px;top:615.10px;font-size:13px;font-weight:400;color:#c2c6ca;transform:scaleX(0.9849);">Ip:</span>
<span class="t" style="left:76.00px;top:615.10px;font-size:13px;font-weight:400;color:#c2c6ca;transform:scaleX(0.9622);">87.236.176.164</span>
<span class="t" style="left:191.00px;top:615.10px;font-size:13px;font-weight:400;color:#c2c6ca;transform:scaleX(1.1398);">my/</span>
<span class="t" style="left:215.00px;top:615.10px;font-size:13px;font-weight:400;color:#c2c6ca;transform:scaleX(0.9805);">haproxy</span>
<span class="t" style="left:262.00px;top:615.10px;font-size:13px;font-weight:400;color:#c2c6ca;transform:scaleX(0.9646);">-ssl-</span>
<span class="t" style="left:287.00px;top:615.10px;font-size:13px;font-weight:400;color:#c2c6ca;transform:scaleX(0.9786);">handshake</span>
<span class="t" style="left:350.00px;top:615.10px;font-size:13px;font-weight:400;color:#c2c6ca;transform:scaleX(1.0178);">-failure</span>
<span class="t" style="left:433.00px;top:615.10px;font-size:13px;font-weight:400;color:#c2c6ca;transform:scaleX(0.8806);">GB</span>
<span class="t" style="left:517.00px;top:615.10px;font-size:13px;font-weight:400;color:#c2c6ca;transform:scaleX(1.0382);">Driftnet Ltd</span>
<span class="t" style="left:889.00px;top:615.10px;font-size:13px;font-weight:400;color:#c2c6ca;transform:scaleX(0.9703);">ban:1</span>
<span class="t" style="left:983.00px;top:615.10px;font-size:13px;font-weight:400;color:#c2c6ca;transform:scaleX(0.9787);">6 hours ago</span>
<div class="b" style="left:12px;top:634px;width:1076.5px;height:1px;background:#242424;"></div>
<span class="t" style="left:16.00px;top:642.10px;font-size:13px;font-weight:400;color:#c2c6ca;transform:scaleX(0.9338);">18103</span>
<span class="t" style="left:61.00px;top:642.10px;font-size:13px;font-weight:400;color:#c2c6ca;transform:scaleX(0.9849);">Ip:</span>
<span class="t" style="left:76.00px;top:642.10px;font-size:13px;font-weight:400;color:#c2c6ca;transform:scaleX(0.9649);">87.236.176.160</span>
<span class="t" style="left:191.00px;top:642.10px;font-size:13px;font-weight:400;color:#c2c6ca;transform:scaleX(1.1398);">my/</span>
<span class="t" style="left:215.00px;top:642.10px;font-size:13px;font-weight:400;color:#c2c6ca;transform:scaleX(0.9805);">haproxy</span>
<span class="t" style="left:262.00px;top:642.10px;font-size:13px;font-weight:400;color:#c2c6ca;transform:scaleX(0.9646);">-ssl-</span>
<span class="t" style="left:287.00px;top:642.10px;font-size:13px;font-weight:400;color:#c2c6ca;transform:scaleX(0.9786);">handshake</span>
<span class="t" style="left:350.00px;top:642.10px;font-size:13px;font-weight:400;color:#c2c6ca;transform:scaleX(1.0178);">-failure</span>
<span class="t" style="left:433.00px;top:642.10px;font-size:13px;font-weight:400;color:#c2c6ca;transform:scaleX(0.8806);">GB</span>
<span class="t" style="left:517.00px;top:642.10px;font-size:13px;font-weight:400;color:#c2c6ca;transform:scaleX(1.0382);">Driftnet Ltd</span>
<span class="t" style="left:889.00px;top:642.10px;font-size:13px;font-weight:400;color:#c2c6ca;transform:scaleX(0.9703);">ban:1</span>
<span class="t" style="left:983.00px;top:642.10px;font-size:13px;font-weight:400;color:#c2c6ca;transform:scaleX(0.9787);">6 hours ago</span>
<div class="b" style="left:12px;top:661px;width:1076.5px;height:1px;background:#242424;"></div>
<span class="t" style="left:16.00px;top:669.10px;font-size:13px;font-weight:400;color:#c2c6ca;transform:scaleX(0.9338);">18102</span>
<span class="t" style="left:61.00px;top:669.10px;font-size:13px;font-weight:400;color:#c2c6ca;transform:scaleX(0.9849);">Ip:</span>
<span class="t" style="left:75.00px;top:669.10px;font-size:13px;font-weight:400;color:#c2c6ca;transform:scaleX(0.9747);">185.247.137.161</span>
<span class="t" style="left:191.00px;top:669.10px;font-size:13px;font-weight:400;color:#c2c6ca;transform:scaleX(1.1398);">my/</span>
<span class="t" style="left:215.00px;top:669.10px;font-size:13px;font-weight:400;color:#c2c6ca;transform:scaleX(0.9805);">haproxy</span>
<span class="t" style="left:262.00px;top:669.10px;font-size:13px;font-weight:400;color:#c2c6ca;transform:scaleX(0.9646);">-ssl-</span>
<span class="t" style="left:287.00px;top:669.10px;font-size:13px;font-weight:400;color:#c2c6ca;transform:scaleX(0.9786);">handshake</span>
<span class="t" style="left:350.00px;top:669.10px;font-size:13px;font-weight:400;color:#c2c6ca;transform:scaleX(1.0178);">-failure</span>
<span class="t" style="left:433.00px;top:669.10px;font-size:13px;font-weight:400;color:#c2c6ca;transform:scaleX(0.8806);">GB</span>
<span class="t" style="left:517.00px;top:669.10px;font-size:13px;font-weight:400;color:#c2c6ca;transform:scaleX(1.0382);">Driftnet Ltd</span>
<span class="t" style="left:889.00px;top:669.10px;font-size:13px;font-weight:400;color:#c2c6ca;transform:scaleX(0.9703);">ban:1</span>
<span class="t" style="left:983.00px;top:669.10px;font-size:13px;font-weight:400;color:#c2c6ca;transform:scaleX(0.9787);">6 hours ago</span>
<div class="b" style="left:12px;top:688px;width:1076.5px;height:1px;background:#242424;"></div>
<span class="t" style="left:16.00px;top:696.10px;font-size:13px;font-weight:400;color:#c2c6ca;transform:scaleX(0.9338);">18101</span>
<span class="t" style="left:61.00px;top:696.10px;font-size:13px;font-weight:400;color:#c2c6ca;transform:scaleX(0.9849);">Ip:</span>
<span class="t" style="left:76.00px;top:696.10px;font-size:13px;font-weight:400;color:#c2c6ca;transform:scaleX(0.9649);">87.255.194.135</span>
<span class="t" style="left:191.00px;top:696.10px;font-size:13px;font-weight:400;color:#c2c6ca;transform:scaleX(1.1398);">my/</span>
<span class="t" style="left:215.00px;top:696.10px;font-size:13px;font-weight:400;color:#c2c6ca;transform:scaleX(0.9805);">haproxy</span>
<span class="t" style="left:262.00px;top:696.10px;font-size:13px;font-weight:400;color:#c2c6ca;transform:scaleX(0.9646);">-ssl-</span>
<span class="t" style="left:287.00px;top:696.10px;font-size:13px;font-weight:400;color:#c2c6ca;transform:scaleX(0.9786);">handshake</span>
<span class="t" style="left:350.00px;top:696.10px;font-size:13px;font-weight:400;color:#c2c6ca;transform:scaleX(1.0178);">-failure</span>
<span class="t" style="left:433.00px;top:696.10px;font-size:13px;font-weight:400;color:#c2c6ca;transform:scaleX(0.8954);">KZ</span>
<span class="t" style="left:517.00px;top:696.10px;font-size:13px;font-weight:400;color:#c2c6ca;transform:scaleX(0.9434);">NLS Kazakhstan LLC</span>
<span class="t" style="left:889.00px;top:696.10px;font-size:13px;font-weight:400;color:#c2c6ca;transform:scaleX(0.9703);">ban:1</span>
<span class="t" style="left:983.00px;top:696.10px;font-size:13px;font-weight:400;color:#c2c6ca;transform:scaleX(0.9787);">6 hours ago</span>
<div class="b" style="left:12px;top:715px;width:1076.5px;height:1px;background:#242424;"></div>
<span class="t" style="left:16.00px;top:723.10px;font-size:13px;font-weight:400;color:#c2c6ca;transform:scaleX(0.9273);">18100</span>
<span class="t" style="left:61.00px;top:723.10px;font-size:13px;font-weight:400;color:#c2c6ca;transform:scaleX(0.9849);">Ip:</span>
<span class="t" style="left:76.00px;top:723.10px;font-size:13px;font-weight:400;color:#c2c6ca;transform:scaleX(0.9655);">20.169.81.226</span>
<span class="t" style="left:191.00px;top:723.10px;font-size:13px;font-weight:400;color:#c2c6ca;transform:scaleX(1.1398);">my/</span>
<span class="t" style="left:215.00px;top:723.10px;font-size:13px;font-weight:400;color:#c2c6ca;transform:scaleX(0.9805);">haproxy</span>
<span class="t" style="left:262.00px;top:723.10px;font-size:13px;font-weight:400;color:#c2c6ca;transform:scaleX(0.9646);">-ssl-</span>
<span class="t" style="left:287.00px;top:723.10px;font-size:13px;font-weight:400;color:#c2c6ca;transform:scaleX(0.9786);">handshake</span>
<span class="t" style="left:350.00px;top:723.10px;font-size:13px;font-weight:400;color:#c2c6ca;transform:scaleX(1.0178);">-failure</span>
<span class="t" style="left:433.00px;top:723.10px;font-size:13px;font-weight:400;color:#c2c6ca;transform:scaleX(0.8771);">US</span>
<span class="t" style="left:517.00px;top:723.10px;font-size:13px;font-weight:400;color:#c2c6ca;transform:scaleX(0.8830);">MICROSOFT</span>
<span class="t" style="left:587.00px;top:723.10px;font-size:13px;font-weight:400;color:#c2c6ca;transform:scaleX(0.8545);">-CORP</span>
<span class="t" style="left:624.00px;top:723.10px;font-size:13px;font-weight:400;color:#c2c6ca;transform:scaleX(0.8977);">-MSN</span>
<span class="t" style="left:655.00px;top:723.10px;font-size:13px;font-weight:400;color:#c2c6ca;transform:scaleX(0.8500);">-AS</span>
<span class="t" style="left:674.00px;top:723.10px;font-size:13px;font-weight:400;color:#c2c6ca;transform:scaleX(0.9067);">-BLOCK</span>
<span class="t" style="left:889.00px;top:723.10px;font-size:13px;font-weight:400;color:#c2c6ca;transform:scaleX(0.9703);">ban:1</span>
<span class="t" style="left:983.00px;top:723.10px;font-size:13px;font-weight:400;color:#c2c6ca;transform:scaleX(0.9787);">7 hours ago</span>
<div class="b" style="left:12px;top:742px;width:1076.5px;height:1px;background:#242424;"></div>
<span class="t" style="left:16.00px;top:750.10px;font-size:13px;font-weight:400;color:#c2c6ca;transform:scaleX(0.9338);">18099</span>
<span class="t" style="left:61.00px;top:750.10px;font-size:13px;font-weight:400;color:#c2c6ca;transform:scaleX(0.9849);">Ip:</span>
<span class="t" style="left:76.00px;top:750.10px;font-size:13px;font-weight:400;color:#c2c6ca;transform:scaleX(0.9629);">20.29.23.140</span>
<span class="t" style="left:191.00px;top:750.10px;font-size:13px;font-weight:400;color:#c2c6ca;transform:scaleX(1.1398);">my/</span>
<span class="t" style="left:215.00px;top:750.10px;font-size:13px;font-weight:400;color:#c2c6ca;transform:scaleX(0.9805);">haproxy</span>
<span class="t" style="left:262.00px;top:750.10px;font-size:13px;font-weight:400;color:#c2c6ca;transform:scaleX(0.9646);">-ssl-</span>
<span class="t" style="left:287.00px;top:750.10px;font-size:13px;font-weight:400;color:#c2c6ca;transform:scaleX(0.9786);">handshake</span>
<span class="t" style="left:350.00px;top:750.10px;font-size:13px;font-weight:400;color:#c2c6ca;transform:scaleX(1.0178);">-failure</span>
<span class="t" style="left:433.00px;top:750.10px;font-size:13px;font-weight:400;color:#c2c6ca;transform:scaleX(0.8771);">US</span>
<span class="t" style="left:517.00px;top:750.10px;font-size:13px;font-weight:400;color:#c2c6ca;transform:scaleX(0.8830);">MICROSOFT</span>
<span class="t" style="left:587.00px;top:750.10px;font-size:13px;font-weight:400;color:#c2c6ca;transform:scaleX(0.8545);">-CORP</span>
<span class="t" style="left:624.00px;top:750.10px;font-size:13px;font-weight:400;color:#c2c6ca;transform:scaleX(0.8977);">-MSN</span>
<span class="t" style="left:655.00px;top:750.10px;font-size:13px;font-weight:400;color:#c2c6ca;transform:scaleX(0.8500);">-AS</span>
<span class="t" style="left:674.00px;top:750.10px;font-size:13px;font-weight:400;color:#c2c6ca;transform:scaleX(0.9067);">-BLOCK</span>
<span class="t" style="left:889.00px;top:750.10px;font-size:13px;font-weight:400;color:#c2c6ca;transform:scaleX(0.9703);">ban:1</span>
<span class="t" style="left:983.00px;top:750.10px;font-size:13px;font-weight:400;color:#c2c6ca;transform:scaleX(0.9787);">7 hours ago</span>
<div class="b" style="left:12px;top:769px;width:1076.5px;height:1px;background:#242424;"></div>
<span class="t" style="left:16.00px;top:777.10px;font-size:13px;font-weight:400;color:#c2c6ca;transform:scaleX(0.9338);">18096</span>
<span class="t" style="left:61.00px;top:777.10px;font-size:13px;font-weight:400;color:#c2c6ca;transform:scaleX(0.9849);">Ip:</span>
<span class="t" style="left:76.00px;top:777.10px;font-size:13px;font-weight:400;color:#c2c6ca;transform:scaleX(0.9773);">20.118.32.235</span>
<span class="t" style="left:191.00px;top:777.10px;font-size:13px;font-weight:400;color:#c2c6ca;transform:scaleX(1.1398);">my/</span>
<span class="t" style="left:215.00px;top:777.10px;font-size:13px;font-weight:400;color:#c2c6ca;transform:scaleX(0.9805);">haproxy</span>
<span class="t" style="left:262.00px;top:777.10px;font-size:13px;font-weight:400;color:#c2c6ca;transform:scaleX(0.9646);">-ssl-</span>
<span class="t" style="left:287.00px;top:777.10px;font-size:13px;font-weight:400;color:#c2c6ca;transform:scaleX(0.9786);">handshake</span>
<span class="t" style="left:350.00px;top:777.10px;font-size:13px;font-weight:400;color:#c2c6ca;transform:scaleX(1.0178);">-failure</span>
<span class="t" style="left:433.00px;top:777.10px;font-size:13px;font-weight:400;color:#c2c6ca;transform:scaleX(0.8771);">US</span>
<span class="t" style="left:517.00px;top:777.10px;font-size:13px;font-weight:400;color:#c2c6ca;transform:scaleX(0.8830);">MICROSOFT</span>
<span class="t" style="left:587.00px;top:777.10px;font-size:13px;font-weight:400;color:#c2c6ca;transform:scaleX(0.8545);">-CORP</span>
<span class="t" style="left:624.00px;top:777.10px;font-size:13px;font-weight:400;color:#c2c6ca;transform:scaleX(0.8977);">-MSN</span>
<span class="t" style="left:655.00px;top:777.10px;font-size:13px;font-weight:400;color:#c2c6ca;transform:scaleX(0.8500);">-AS</span>
<span class="t" style="left:674.00px;top:777.10px;font-size:13px;font-weight:400;color:#c2c6ca;transform:scaleX(0.9067);">-BLOCK</span>
<span class="t" style="left:889.00px;top:777.10px;font-size:13px;font-weight:400;color:#c2c6ca;transform:scaleX(0.9703);">ban:1</span>
<span class="t" style="left:983.00px;top:777.10px;font-size:13px;font-weight:400;color:#c2c6ca;transform:scaleX(0.9787);">9 hours ago</span>
<div class="b" style="left:12px;top:796px;width:1076.5px;height:1px;background:#242424;"></div>
<span class="t" style="left:16.00px;top:804.10px;font-size:13px;font-weight:400;color:#c2c6ca;transform:scaleX(0.9338);">18095</span>
<span class="t" style="left:61.00px;top:804.10px;font-size:13px;font-weight:400;color:#c2c6ca;transform:scaleX(0.9849);">Ip:</span>
<span class="t" style="left:76.00px;top:804.10px;font-size:13px;font-weight:400;color:#c2c6ca;transform:scaleX(0.9655);">201.7.170.246</span>
<span class="t" style="left:191.00px;top:804.10px;font-size:13px;font-weight:400;color:#c2c6ca;transform:scaleX(1.1398);">my/</span>
<span class="t" style="left:215.00px;top:804.10px;font-size:13px;font-weight:400;color:#c2c6ca;transform:scaleX(0.9805);">haproxy</span>
<span class="t" style="left:262.00px;top:804.10px;font-size:13px;font-weight:400;color:#c2c6ca;transform:scaleX(0.9646);">-ssl-</span>
<span class="t" style="left:287.00px;top:804.10px;font-size:13px;font-weight:400;color:#c2c6ca;transform:scaleX(0.9786);">handshake</span>
<span class="t" style="left:350.00px;top:804.10px;font-size:13px;font-weight:400;color:#c2c6ca;transform:scaleX(1.0178);">-failure</span>
<span class="t" style="left:433.00px;top:804.10px;font-size:13px;font-weight:400;color:#c2c6ca;transform:scaleX(0.8886);">BR</span>
<span class="t" style="left:517.00px;top:804.10px;font-size:13px;font-weight:400;color:#c2c6ca;transform:scaleX(0.8941);">SAVNET TELECOMUNICACOES LTDA</span>
<span class="t" style="left:889.00px;top:804.10px;font-size:13px;font-weight:400;color:#c2c6ca;transform:scaleX(0.9703);">ban:1</span>
<span class="t" style="left:983.00px;top:804.10px;font-size:13px;font-weight:400;color:#c2c6ca;transform:scaleX(0.9787);">9 hours ago</span>
<div class="b" style="left:12px;top:823px;width:1076.5px;height:1px;background:#242424;"></div>
<span class="t" style="left:16.00px;top:831.10px;font-size:13px;font-weight:400;color:#c2c6ca;transform:scaleX(0.9273);">18094</span>
<span class="t" style="left:61.00px;top:831.10px;font-size:13px;font-weight:400;color:#c2c6ca;transform:scaleX(0.9849);">Ip:</span>
<span class="t" style="left:76.00px;top:831.10px;font-size:13px;font-weight:400;color:#c2c6ca;transform:scaleX(0.9655);">202.93.141.18</span>
<span class="t" style="left:191.00px;top:831.10px;font-size:13px;font-weight:400;color:#c2c6ca;transform:scaleX(1.1398);">my/</span>
<span class="t" style="left:215.00px;top:831.10px;font-size:13px;font-weight:400;color:#c2c6ca;transform:scaleX(0.9805);">haproxy</span>
<span class="t" style="left:262.00px;top:831.10px;font-size:13px;font-weight:400;color:#c2c6ca;transform:scaleX(0.9646);">-ssl-</span>
<span class="t" style="left:287.00px;top:831.10px;font-size:13px;font-weight:400;color:#c2c6ca;transform:scaleX(0.9786);">handshake</span>
<span class="t" style="left:350.00px;top:831.10px;font-size:13px;font-weight:400;color:#c2c6ca;transform:scaleX(1.0178);">-failure</span>
<span class="t" style="left:433.00px;top:831.10px;font-size:13px;font-weight:400;color:#c2c6ca;transform:scaleX(0.9000);">ID</span>
<span class="t" style="left:517.00px;top:831.10px;font-size:13px;font-weight:400;color:#c2c6ca;transform:scaleX(0.9923);">PT. Indonusa System Integrator Prima</span>
<span class="t" style="left:889.00px;top:831.10px;font-size:13px;font-weight:400;color:#c2c6ca;transform:scaleX(0.9703);">ban:1</span>
<span class="t" style="left:983.00px;top:831.10px;font-size:13px;font-weight:400;color:#c2c6ca;transform:scaleX(0.9787);">9 hours ago</span>
<div class="b" style="left:12px;top:850px;width:1076.5px;height:1px;background:#242424;"></div>
<span class="t" style="left:16.00px;top:858.10px;font-size:13px;font-weight:400;color:#c2c6ca;transform:scaleX(0.9338);">18093</span>
<span class="t" style="left:61.00px;top:858.10px;font-size:13px;font-weight:400;color:#c2c6ca;transform:scaleX(0.9849);">Ip:</span>
<span class="t" style="left:75.00px;top:858.10px;font-size:13px;font-weight:400;color:#c2c6ca;transform:scaleX(0.9760);">18.135.247.138</span>
<span class="t" style="left:191.00px;top:858.10px;font-size:13px;font-weight:400;color:#c2c6ca;transform:scaleX(1.1398);">my/</span>
<span class="t" style="left:215.00px;top:858.10px;font-size:13px;font-weight:400;color:#c2c6ca;transform:scaleX(0.9805);">haproxy</span>
<span class="t" style="left:262.00px;top:858.10px;font-size:13px;font-weight:400;color:#c2c6ca;transform:scaleX(0.9646);">-ssl-</span>
<span class="t" style="left:287.00px;top:858.10px;font-size:13px;font-weight:400;color:#c2c6ca;transform:scaleX(0.9786);">handshake</span>
<span class="t" style="left:350.00px;top:858.10px;font-size:13px;font-weight:400;color:#c2c6ca;transform:scaleX(1.0178);">-failure</span>
<span class="t" style="left:433.00px;top:858.10px;font-size:13px;font-weight:400;color:#c2c6ca;transform:scaleX(0.8806);">GB</span>
<span class="t" style="left:517.00px;top:858.10px;font-size:13px;font-weight:400;color:#c2c6ca;transform:scaleX(0.9214);">AMAZON-02</span>
<span class="t" style="left:889.00px;top:858.10px;font-size:13px;font-weight:400;color:#c2c6ca;transform:scaleX(0.9703);">ban:1</span>
<span class="t" style="left:983.00px;top:858.10px;font-size:13px;font-weight:400;color:#c2c6ca;transform:scaleX(0.9787);">9 hours ago</span>
<span class="t" style="left:11.00px;top:882.04px;font-size:12px;font-weight:400;color:#d9650f;transform:scaleX(0.8548);">OPNsense</span>
<span class="t" style="left:64.00px;top:882.04px;font-size:12px;font-weight:400;color:#a0a4a8;transform:scaleX(0.8774);">(c) 2014-2025</span>
<span class="t" style="left:133.00px;top:882.04px;font-size:12px;font-weight:400;color:#d9650f;transform:scaleX(0.8455);">Deciso B.V.</span>
</body></html>
